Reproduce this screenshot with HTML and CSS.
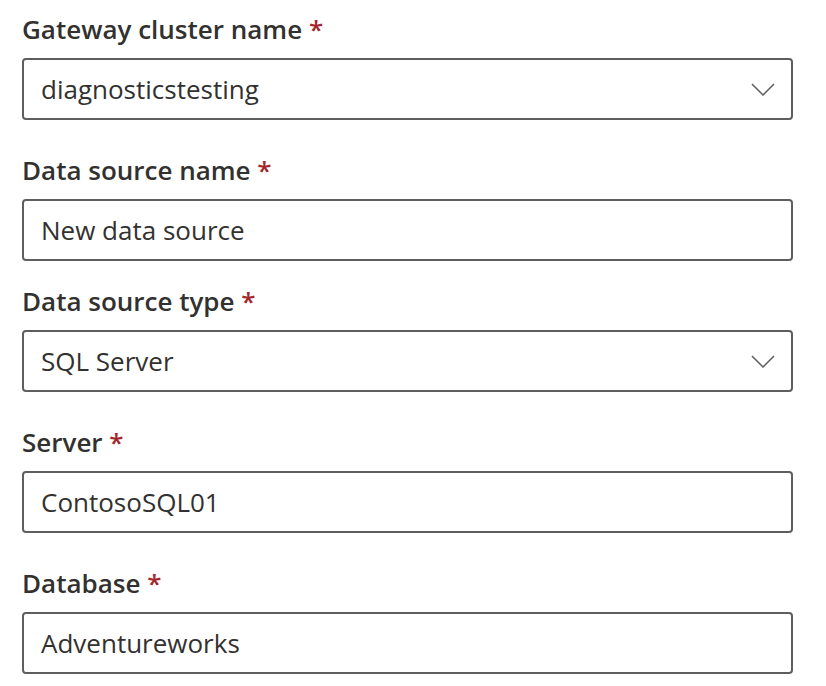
FILE: index.html
```html
<!DOCTYPE html>
<html lang="en">
<head>
  <meta charset="UTF-8">
  <title>New data source</title>
  <link rel="stylesheet" href="styles.css">
</head>
<body>

  <div class="form">
    <div class="field">
      <label>Gateway cluster name <span class="req">*</span></label>
      <div class="box">
        <span class="value">diagnosticstesting</span>
        <svg class="chevron" width="24" height="13" viewBox="0 0 24 13"><path d="M1 1 L12 12 L23 1" fill="none" stroke="#605e5c" stroke-width="1.5"/></svg>
      </div>
    </div>

    <div class="field tight">
      <label>Data source name <span class="req">*</span></label>
      <div class="box">
        <span class="value">New data source</span>
      </div>
    </div>

    <div class="field">
      <label>Data source type <span class="req">*</span></label>
      <div class="box">
        <span class="value">SQL Server</span>
        <svg class="chevron" width="24" height="13" viewBox="0 0 24 13"><path d="M1 1 L12 12 L23 1" fill="none" stroke="#605e5c" stroke-width="1.5"/></svg>
      </div>
    </div>

    <div class="field">
      <label>Server <span class="req">*</span></label>
      <div class="box">
        <span class="value">ContosoSQL01</span>
      </div>
    </div>

    <div class="field">
      <label>Database <span class="req">*</span></label>
      <div class="box">
        <span class="value">Adventureworks</span>
      </div>
    </div>
  </div>

</body>
</html>
```

FILE: styles.css
```css
body {
  margin: 0;
  padding: 11px 0 0 22px;
  background: #fff;
  font-family: "Open Sans", "Noto Sans", sans-serif;
  color: #323130;
}
.form {
  width: 771px;
}
.field {
  margin-bottom: 32px;
}
.field.tight {
  margin-bottom: 22px;
}
label {
  display: block;
  font-size: 26px;
  font-weight: 600;
  line-height: 36px;
  margin-bottom: 11px;
}
.req {
  color: #a4262c;
}
.box {
  box-sizing: border-box;
  height: 62px;
  border: 2px solid #605e5c;
  border-radius: 4px;
  display: flex;
  align-items: center;
  justify-content: space-between;
  padding: 0 16px 0 17px;
  font-size: 26px;
}
.chevron {
  display: block;
}
```
